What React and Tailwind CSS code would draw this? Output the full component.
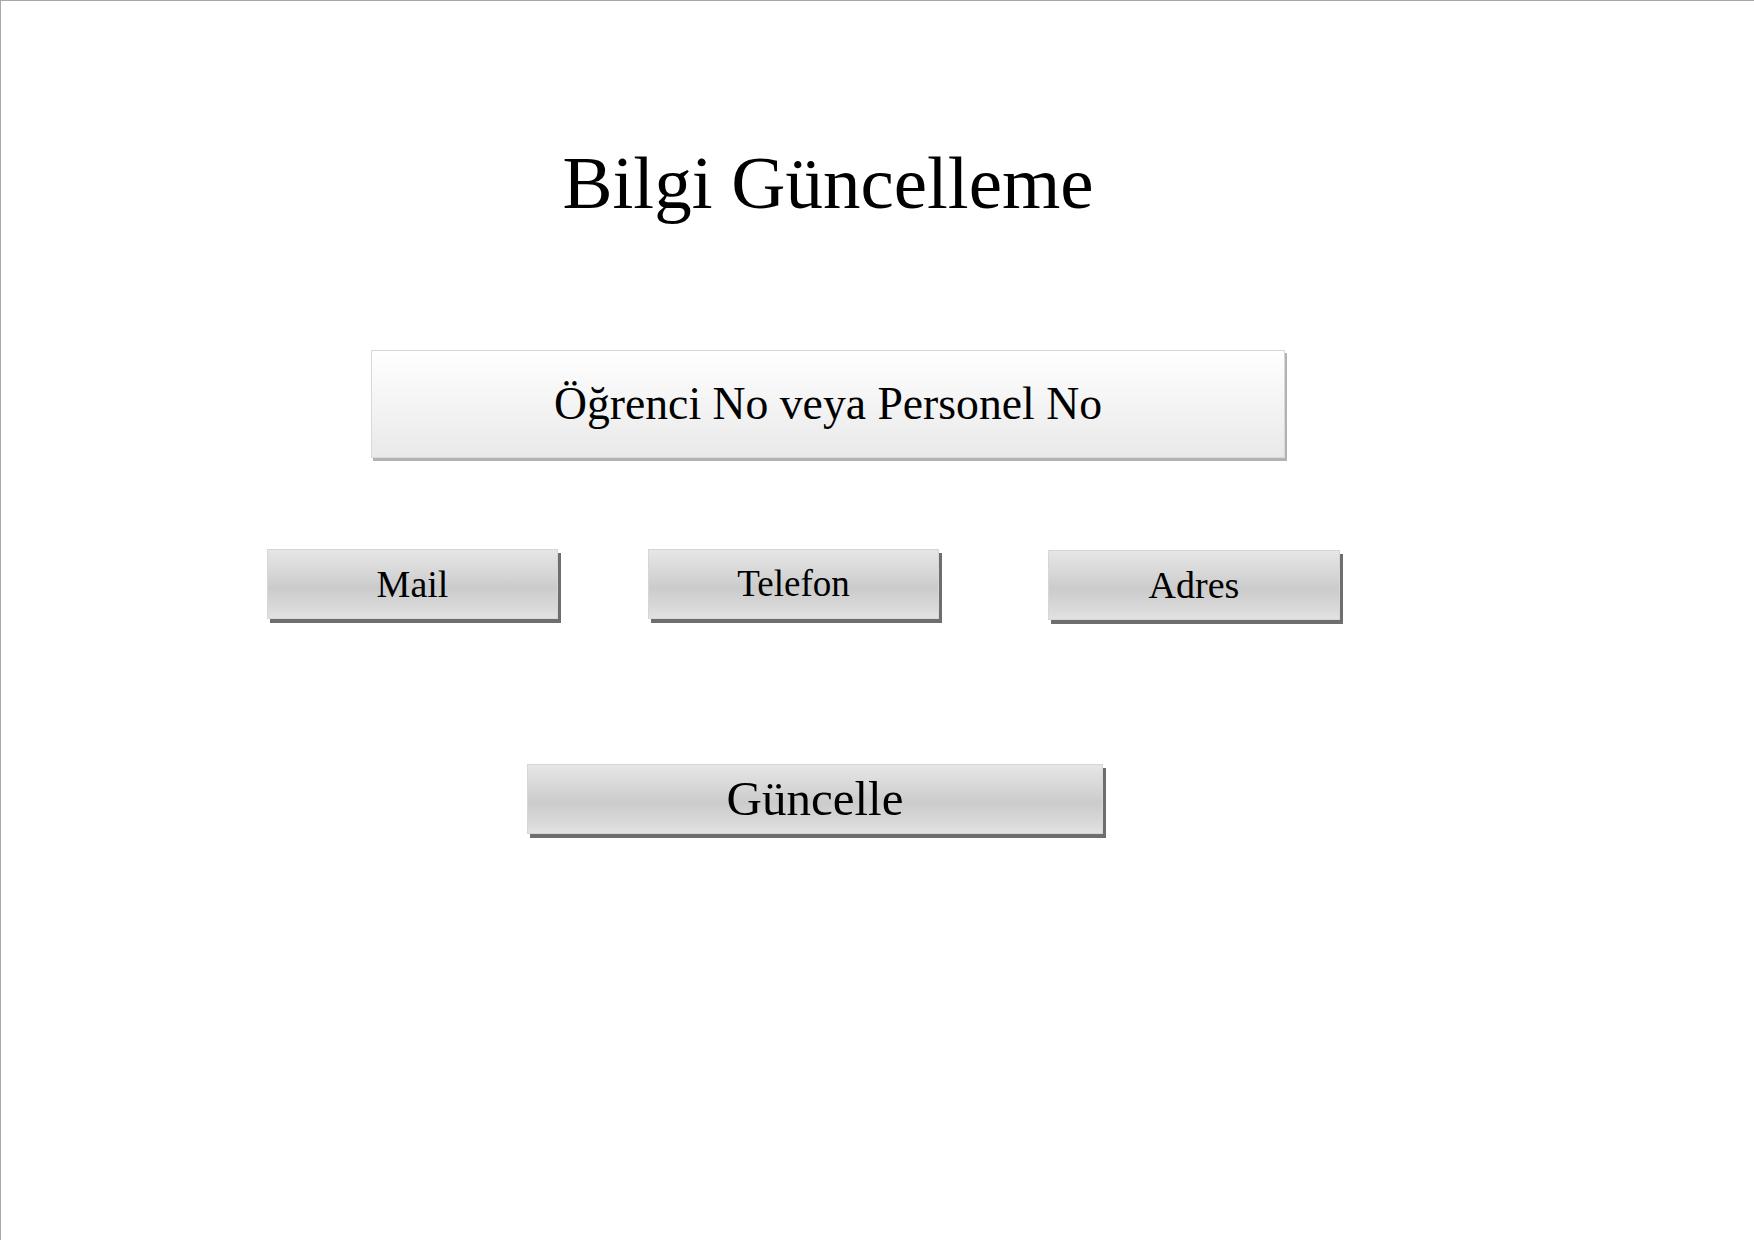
export default function App() {
  const serif = { fontFamily: '"Liberation Serif", "Times New Roman", serif' };
  const btn =
    "flex items-center justify-center border border-[#d6d6d6] bg-[linear-gradient(to_bottom,#e6e6e6_0%,#d6d6d6_35%,#cbcbcb_55%,#d9d9d9_85%,#e2e2e2_100%)] shadow-[3px_4px_0_#6e6e6e] text-black";
  return (
    <div className="w-[1754px] h-[1240px] bg-white border-l border-t border-[#a8a8a8] overflow-hidden" style={serif}>
      <div className="ml-[370px] w-[914px] mt-[144px] h-[76px] leading-[76px] text-[75px] text-center text-black">
        Bilgi Güncelleme
      </div>
      <div className="ml-[370px] mt-[129px] w-[914px] h-[108px] flex items-center justify-center border border-[#d8d8d8] bg-[linear-gradient(to_bottom,#ffffff_0%,#f6f6f6_40%,#e9e9e9_100%)] shadow-[2px_3px_0_#b2b2b2] text-[45.7px] text-black">
        Öğrenci No veya Personel No
      </div>
      <div className="mt-[91px] flex">
        <div className={`${btn} ml-[266px] w-[291px] h-[70px] text-[38px]`}>Mail</div>
        <div className={`${btn} ml-[90px] w-[291px] h-[70px] text-[37px]`}>Telefon</div>
        <div className={`${btn} ml-[109px] w-[292px] h-[70px] text-[38px] mt-px`}>Adres</div>
      </div>
      <div className={`${btn} ml-[526px] mt-[144px] w-[576px] h-[70px] text-[49px]`}>Güncelle</div>
    </div>
  );
}
